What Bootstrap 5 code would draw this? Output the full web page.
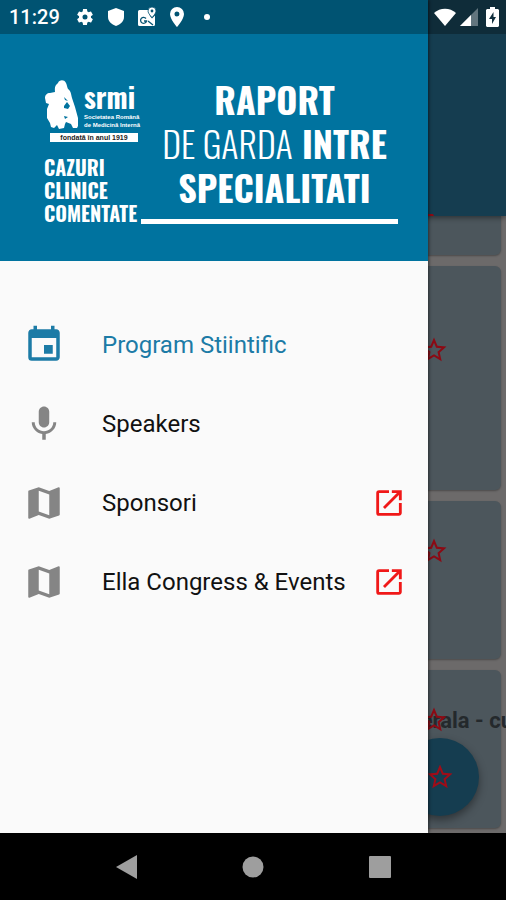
<!DOCTYPE html>
<html lang="ro">
<head>
<meta charset="utf-8">
<meta name="viewport" content="width=device-width, initial-scale=1">
<title>Raport de garda intre specialitati</title>
<link href="https://cdn.jsdelivr.net/npm/bootstrap@5.3.0/dist/css/bootstrap.min.css" rel="stylesheet">
<style>
  body { font-family: Roboto, "Liberation Sans", sans-serif; background: #6c6a6a; }
  svg { display: block; flex: none; fill: currentColor; }
  .status { height: 34px; padding: 0 7px 0 9px; background: rgba(0, 0, 0, .28); z-index: 3; color: #fff; font-size: 20px; font-weight: 500; line-height: 34px; }
  .status-gap { gap: 12px; }
  .clock { margin-right: 3px; }
  .toolbar { height: 216px; background: #153d50; box-shadow: 0 2px 5px rgba(0, 0, 0, .4); color: #8c0a14; padding-right: 72px; }
  .feed { gap: 11px; padding: 0 5px 5px; }
  .session { background: #4c565c; border-radius: 6px; color: #8c0a14; padding: 35px 52px 0 0; height: 158px; box-shadow: 0 1px 2px rgba(0, 0, 0, .3); }
  .session-cut { height: 39px; border-radius: 0 0 6px 6px; }
  .session-tall { height: 224px; padding-top: 69px; }
  .session-name { right: -12px; top: 36px; font-size: 22px; line-height: 30px; font-weight: 700; color: #24292c; white-space: nowrap; }
  .fab { width: 78px; height: 78px; right: 27px; bottom: 17px; background: #153d50; color: #a00c18; box-shadow: 0 4px 8px rgba(0, 0, 0, .4); }
  .drawer { width: calc(100% - 78px); background: #fafafa; z-index: 2; box-shadow: 1px 0 3px rgba(0, 0, 0, .5); }
  .banner { background: #00739f; color: #fff; height: 261px; padding: 77px 30px 0 44px; font-family: Oswald, "Roboto Condensed", "Liberation Sans Narrow", sans-serif; }
  .brand-col { width: 97px; padding-top: 2px; }
  .wordmark { font-size: 28px; line-height: 22px; font-weight: 700; margin-bottom: 5px; }
  .society { font: 700 6px/8px "Liberation Sans", sans-serif; white-space: nowrap; }
  .founded { font: 700 7px/9px "Liberation Sans", sans-serif; background: #fff; color: #222; width: 88px; margin: 4px 0 0 6px; }
  .tagline { font-size: 20px; line-height: 23px; font-weight: 700; margin-top: 14px; white-space: nowrap; }
  .headline { font-size: 36px; line-height: 44px; font-weight: 700; white-space: nowrap; margin: 0; padding-left: 10px; }
  .headline span { font-weight: 300; }
  .rule { height: 5px; background: #fff; margin-top: 10px; }
  .menu { padding-top: 44px; }
  .menu a { height: 79px; padding: 0 22px 0 23px; color: #111; font-size: 24px; line-height: 32px; }
  .menu a .lead-icon { color: #858585; margin-right: 37px; }
  .menu a.active, .menu a.active .lead-icon { color: #1c7ba6; }
  .menu .ext { color: #f01818; }
  .sysnav { height: 67px; background: #000; color: #9e9e9e; z-index: 4; padding: 0 12.5%; }
  .sysnav button { color: inherit; }
</style>
</head>
<body>
<svg class="d-none" xmlns="http://www.w3.org/2000/svg">
  <symbol id="star" viewBox="0 0 24 24"><path d="M22 9.24l-7.19-.62L12 2 9.19 8.63 2 9.24l5.46 4.73L5.82 21 12 17.27 18.18 21l-1.63-7.03L22 9.24zM12 15.4l-3.76 2.27 1-4.28-3.32-2.88 4.38-.38L12 6.1l1.71 4.04 4.38.38-3.32 2.88 1 4.28L12 15.4z"/></symbol>
  <symbol id="map" viewBox="0 0 24 24"><path d="M20.5 3l-.16.03L15 5.1 9 3 3.36 4.9c-.21.07-.36.25-.36.48V20.5c0 .28.22.5.5.5l.16-.03L9 18.9l6 2.1 5.64-1.9c.21-.07.36-.25.36-.48V3.5c0-.28-.22-.5-.5-.5zM15 19l-6-2.11V5l6 2.11V19z"/></symbol>
  <symbol id="external" viewBox="0 0 24 24"><path d="M19 19H5V5h7V3H5a2 2 0 0 0-2 2v14a2 2 0 0 0 2 2h14c1.1 0 2-.9 2-2v-7h-2v7zM14 3v2h3.59l-9.83 9.83 1.41 1.41L19 6.41V10h2V3h-7z"/></symbol>
</svg>
<div class="d-flex flex-column vh-100 position-relative">
  <header class="status position-absolute top-0 start-0 end-0 d-flex align-items-center justify-content-between">
    <div class="d-flex align-items-center status-gap">
      <span class="clock">11:29</span>
      <svg width="20" height="20" viewBox="0 0 24 24"><path d="M19.14 12.94c.04-.3.06-.61.06-.94s-.02-.64-.07-.94l2.03-1.58a.49.49 0 0 0 .12-.61l-1.92-3.32a.49.49 0 0 0-.59-.22l-2.39.96c-.5-.38-1.03-.7-1.62-.94L14.4 2.81a.48.48 0 0 0-.48-.41h-3.84c-.24 0-.43.17-.47.41l-.36 2.54c-.59.24-1.13.57-1.62.94l-2.39-.96a.48.48 0 0 0-.59.22L2.74 8.87c-.12.21-.08.47.12.61l2.03 1.58c-.05.3-.09.63-.09.94s.02.64.07.94l-2.03 1.58a.49.49 0 0 0-.12.61l1.92 3.32c.12.22.37.29.59.22l2.39-.96c.5.38 1.03.7 1.62.94l.36 2.54c.05.24.24.41.48.41h3.84c.24 0 .44-.17.47-.41l.36-2.54c.59-.24 1.13-.56 1.62-.94l2.39.96c.22.08.47 0 .59-.22l1.92-3.32a.48.48 0 0 0-.12-.61l-2.01-1.58zM12 15a3 3 0 1 1 0-6 3 3 0 0 1 0 6z"/></svg>
      <svg width="18" height="20" viewBox="0 0 18 20"><path d="M9 1l8 3v6c0 4-3.400 7.500-8 9-4.600-1.500-8-5-8-9V4z"/></svg>
      <svg width="19" height="20" viewBox="0 0 19 20"><path d="M2.500 3h9c0 3.500 1 5.500 3.500 8.500L18 8.500V17.500a1.500 1.500 0 0 1-1.500 1.500h-14A1.500 1.500 0 0 1 1 17.500v-13A1.500 1.500 0 0 1 2.500 3z"/><path d="M15 0a4 4 0 0 1 4 4c0 2.500-4 6.500-4 6.500S11 6.500 11 4a4 4 0 0 1 4-4z" stroke="#075473" stroke-width=".8"/><circle cx="15" cy="4" r="1.400" fill="#075473"/><path d="M9 11.500a3 3 0 1 0 .5 2.500H7M11 14l5 4" fill="none" stroke="#075473" stroke-width="1.300"/></svg>
      <svg width="18" height="20" viewBox="3 2 18 20"><path d="M12 2a7 7 0 0 0-7 7c0 5.250 7 13 7 13s7-7.750 7-13a7 7 0 0 0-7-7zm0 9.500a2.500 2.500 0 1 1 0-5 2.500 2.500 0 0 1 0 5z"/></svg>
      <svg width="18" height="8" viewBox="0 0 18 8"><circle cx="9" cy="4" r="3"/></svg>
    </div>
    <div class="d-flex align-items-center gap-1">
      <svg width="22" height="18" viewBox="0 0 22 18"><path d="M0 5C6-.8 16-.8 22 5L11 18z"/></svg>
      <svg width="18" height="18" viewBox="0 0 18 18"><path d="M18 0v18H0z" opacity=".35"/><path d="M11 7v11H0z"/></svg>
      <svg class="ms-1" width="13" height="20" viewBox="0 0 13 20"><path d="M4 0h5v2h3l1 1v16l-1 1H1l-1-1V3l1-1h3z"/><path d="M7.500 5L3 12h3v5l4-7H7.500z" fill="#12303e"/></svg>
    </div>
  </header>

  <main class="flex-grow-1 position-relative overflow-hidden">
    <div class="toolbar position-relative d-flex align-items-end justify-content-end"><svg width="6" height="3" viewBox="0 0 6 3"><path d="M0 1h5l1 2H0z"/></svg></div>
    <div class="feed d-flex flex-column">
      <div class="session session-cut"></div>
      <div class="session session-tall d-flex justify-content-end"><svg width="30" height="30"><use href="#star"/></svg></div>
      <div class="session d-flex justify-content-end"><svg width="30" height="30"><use href="#star"/></svg></div>
      <div class="session d-flex justify-content-end position-relative">
        <div class="session-name position-absolute">erala - cu</div>
        <svg class="position-relative" width="30" height="30"><use href="#star"/></svg>
      </div>
    </div>
    <button type="button" class="fab btn rounded-circle border-0 p-0 position-absolute d-flex align-items-center justify-content-center" aria-label="Favorite"><svg width="30" height="30"><use href="#star"/></svg></button>

    <aside class="drawer position-absolute top-0 bottom-0 start-0">
      <div class="banner">
        <div class="d-flex">
          <div class="brand-col">
            <div class="d-flex align-items-end">
              <svg width="36" height="50" viewBox="0 0 36 50"><path d="M14 4c1-3 6-4 8 0 1 2 1 4 2 6 3 2 3 5 4 9l3 9 3 11v8l-1 2h-4l-2-4-5-2-1 2-1 4-5 1-2-4-3 3-3-1-1-4-3-5v-9l2-5-3-1-1-5c0-3 2-5 5-5l5-1c0-3-1-6 3-9z"/><path d="M20 18l4 4-3-1zM20 27l3-4 3 4-2 3-4-1zM20 37l4 1-3 2z" fill="#00739f"/></svg>
              <div class="ms-1">
                <div class="wordmark">srmi</div>
                <div class="society">Societatea Română<br>de Medicină Internă</div>
              </div>
            </div>
            <div class="founded text-center">fondată în anul 1919</div>
            <div class="tagline">CAZURI<br>CLINICE<br>COMENTATE</div>
          </div>
          <div class="flex-grow-1">
            <h1 class="headline text-center">RAPORT<br><span>DE GARDA</span> INTRE<br>SPECIALITATI</h1>
            <div class="rule"></div>
          </div>
        </div>
      </div>
      <nav class="menu d-flex flex-column">
        <a href="#program" class="active d-flex align-items-center text-decoration-none"><svg class="lead-icon" width="42" height="42" viewBox="0 0 24 24"><path d="M17 12h-5v5h5v-5zM16 1v2H8V1H6v2H5c-1.110 0-1.990.9-1.990 2L3 19a2 2 0 0 0 2 2h14c1.100 0 2-.9 2-2V5c0-1.100-.9-2-2-2h-1V1h-2zm3 18H5V8h14v11z"/></svg>Program Stiintific</a>
        <a href="#speakers" class="d-flex align-items-center text-decoration-none"><svg class="lead-icon" width="42" height="42" viewBox="0 0 24 24"><path d="M12 14c1.660 0 2.990-1.340 2.990-3L15 5c0-1.660-1.340-3-3-3S9 3.340 9 5v6c0 1.660 1.340 3 3 3zm5.300-3c0 3-2.540 5.100-5.300 5.100S6.700 14 6.700 11H5c0 3.410 2.720 6.230 6 6.720V21h2v-3.280c3.280-.48 6-3.300 6-6.720h-1.700z"/></svg>Speakers</a>
        <a href="#sponsori" class="d-flex align-items-center text-decoration-none"><svg class="lead-icon" width="42" height="42"><use href="#map"/></svg>Sponsori<svg class="ext ms-auto" width="34" height="34"><use href="#external"/></svg></a>
        <a href="#ella" class="d-flex align-items-center text-decoration-none"><svg class="lead-icon" width="42" height="42"><use href="#map"/></svg>Ella Congress &amp; Events<svg class="ext ms-auto" width="34" height="34"><use href="#external"/></svg></a>
      </nav>
    </aside>
  </main>

  <footer class="sysnav d-flex align-items-center justify-content-around">
    <button type="button" class="btn border-0 p-0" aria-label="Back"><svg width="22" height="24" viewBox="0 0 22 24"><path d="M21 0v24L0 12z"/></svg></button>
    <button type="button" class="btn border-0 p-0" aria-label="Home"><svg width="22" height="22" viewBox="0 0 22 22"><circle cx="11" cy="11" r="10.500"/></svg></button>
    <button type="button" class="btn border-0 p-0" aria-label="Recents"><svg width="22" height="22" viewBox="0 0 22 22"><rect width="22" height="22" rx="1"/></svg></button>
  </footer>
</div>
<script src="https://cdn.jsdelivr.net/npm/bootstrap@5.3.0/dist/js/bootstrap.bundle.min.js"></script>
</body>
</html>
